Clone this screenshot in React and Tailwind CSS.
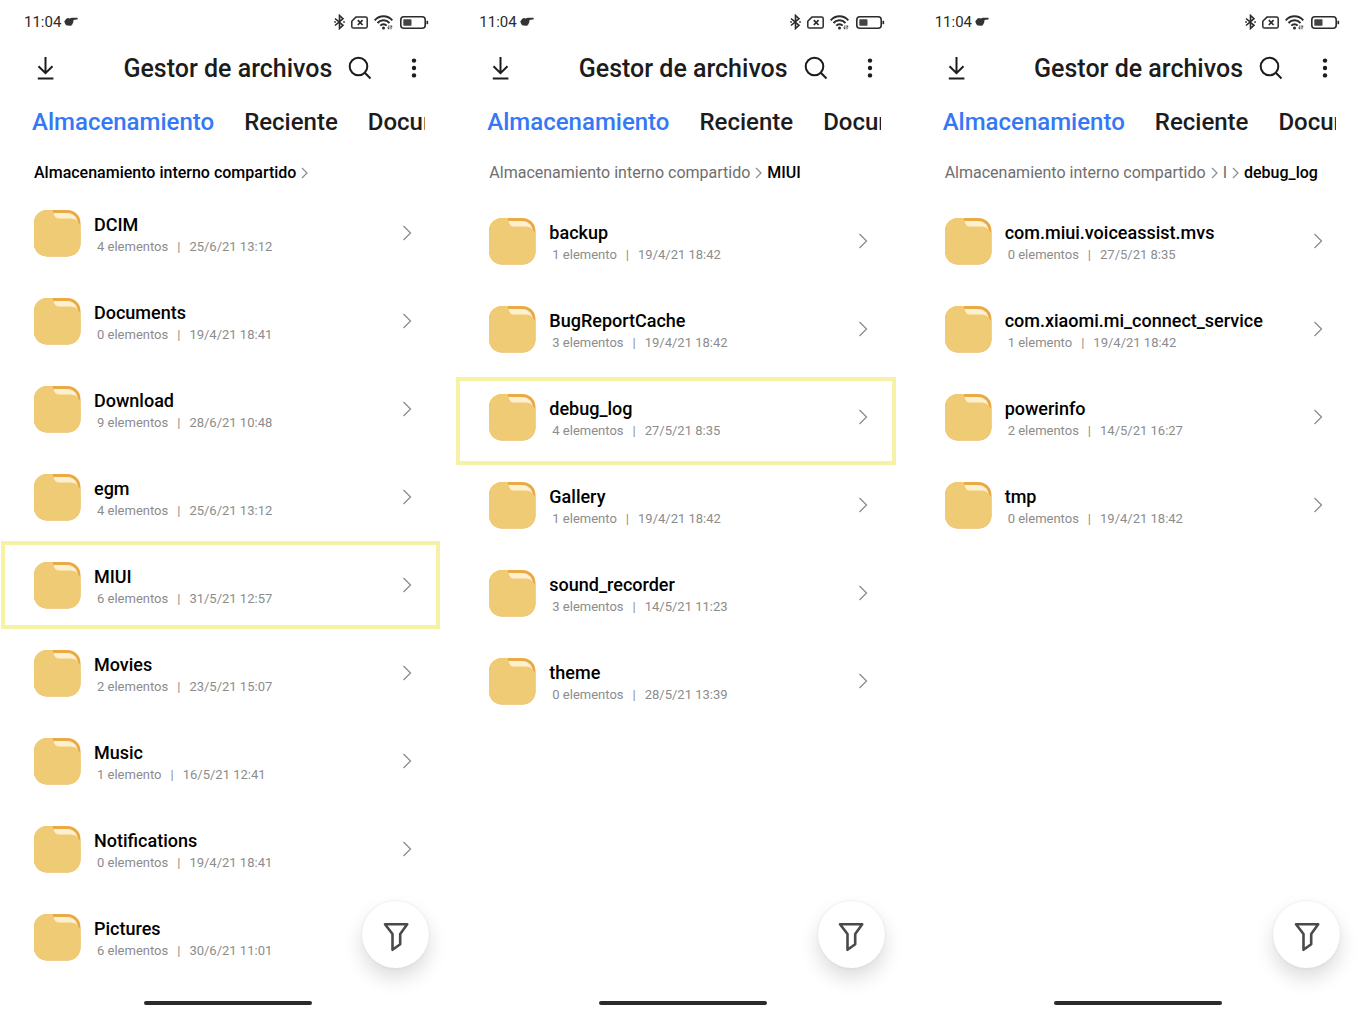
import React from "react";

const screens = [
  {
    id: "root",
    trail: ["Almacenamiento interno compartido"],
    trailingChevron: true,
    items: [
      { name: "DCIM", count: "4 elementos", date: "25/6/21 13:12" },
      { name: "Documents", count: "0 elementos", date: "19/4/21 18:41" },
      { name: "Download", count: "9 elementos", date: "28/6/21 10:48" },
      { name: "egm", count: "4 elementos", date: "25/6/21 13:12" },
      { name: "MIUI", count: "6 elementos", date: "31/5/21 12:57", mark: "top-0" },
      { name: "Movies", count: "2 elementos", date: "23/5/21 15:07" },
      { name: "Music", count: "1 elemento", date: "16/5/21 12:41" },
      { name: "Notifications", count: "0 elementos", date: "19/4/21 18:41" },
      { name: "Pictures", count: "6 elementos", date: "30/6/21 11:01" },
    ],
  },
  {
    id: "miui",
    trail: ["Almacenamiento interno compartido", "MIUI"],
    items: [
      { name: "backup", count: "1 elemento", date: "19/4/21 18:42" },
      { name: "BugReportCache", count: "3 elementos", date: "19/4/21 18:42" },
      { name: "debug_log", count: "4 elementos", date: "27/5/21 8:35", mark: "top-1" },
      { name: "Gallery", count: "1 elemento", date: "19/4/21 18:42" },
      { name: "sound_recorder", count: "3 elementos", date: "14/5/21 11:23" },
      { name: "theme", count: "0 elementos", date: "28/5/21 13:39" },
    ],
  },
  {
    id: "debug",
    trail: ["Almacenamiento interno compartido", "I", "debug_log"],
    items: [
      { name: "com.miui.voiceassist.mvs", count: "0 elementos", date: "27/5/21 8:35" },
      { name: "com.xiaomi.mi_connect_service", count: "1 elemento", date: "19/4/21 18:42" },
      { name: "powerinfo", count: "2 elementos", date: "14/5/21 16:27" },
      { name: "tmp", count: "0 elementos", date: "19/4/21 18:42" },
    ],
  },
];

function StatusBar() {
  return (
    <div className="mt-1 flex h-9 items-center justify-between pr-[26px] pl-6 text-[#2b2b2b]">
      <div className="flex items-center gap-[3px]">
        <span className="text-[15px] leading-5">11:04</span>
        <svg width="14" height="10" viewBox="0 0 14 10" fill="#333" aria-hidden="true">
          <path d="M.3 4.2 2.6 1.6C3.400.8 4.500.7 5.500 1.500L8 .8h5c1 0 1 1.700 0 1.800L9.300 2.900c.5.600.4 1.200-.1 1.700.3.700 0 1.300-.5 1.600.1.700-.3 1.200-.8 1.400-.2 1-1 1.400-1.900 1.200L3.200 8.600C1.800 8.200.8 7 .3 4.200z" />
        </svg>
      </div>
      <div className="flex items-center gap-[6px]">
        <svg width="11" height="16" viewBox="0 0 11 16" fill="none" stroke="currentColor" strokeWidth="1.600" aria-hidden="true">
          <path d="M1 4.500 9 11.300 5.500 14.500V1.500L9 4.700 1 11.500" />
          <path d="M.2 8h1.700M9.200 8h1.700" />
        </svg>
        <svg width="17" height="13" viewBox="0 0 17 13" fill="none" stroke="currentColor" aria-hidden="true">
          <path d="M5.200.9h9.300a1.700 1.700 0 0 1 1.700 1.700v7.800a1.700 1.700 0 0 1-1.700 1.700H2.500A1.700 1.700 0 0 1 .8 10.400V5.300z" strokeWidth="1.500" strokeLinejoin="round" />
          <path d="m6.800 4.200 4.800 4.800M11.600 4.200 6.800 9" strokeWidth="1.700" />
        </svg>
        <svg width="20" height="15" viewBox="0 0 20 15" fill="none" stroke="currentColor" strokeWidth="1.900" aria-hidden="true">
          <path d="M.7 5.300C5.500-.1 13.500-.1 18.300 5.300M3.500 8c3.300-3.600 8.700-3.600 12 0M6.300 10.600c1.800-1.900 4.600-1.900 6.400 0" />
          <circle cx="9.500" cy="12.900" r="1.500" fill="currentColor" stroke="none" />
          <path d="M14.800 10.500v3.700M17 10.500v3.700M13.500 12.600l1.300 1.500M17 10.600l1.300 1.500" strokeWidth=".9" />
        </svg>
        <svg width="29" height="13" viewBox="0 0 29 13" fill="none" aria-hidden="true">
          <rect x=".8" y=".8" width="24.400" height="11.400" rx="3" stroke="currentColor" strokeWidth="1.600" />
          <rect x="3.300" y="3.300" width="8.200" height="6.400" rx=".6" fill="#444" />
          <path d="M27.300 4.800v3.400" stroke="currentColor" strokeWidth="1.700" />
        </svg>
      </div>
    </div>
  );
}

function TitleBar() {
  return (
    <header className="flex h-14 items-center pr-[31px] pl-8 text-[#1c1c1c]">
      <button type="button" aria-label="Descargas" className="flex size-7 items-center justify-center">
        <svg width="18" height="24" viewBox="0 0 18 24" fill="none" stroke="currentColor" strokeWidth="2" aria-hidden="true">
          <path d="M8.500 1v16M1.500 10.200l7 7 7-7M.8 22.500h15.600" />
        </svg>
      </button>
      <h1 className="flex-1 pt-0.5 text-right text-[25px] leading-8 font-medium whitespace-nowrap">Gestor de archivos</h1>
      <button type="button" aria-label="Buscar" className="ml-4 flex size-6 items-center justify-center">
        <svg width="24" height="24" viewBox="0 0 24 24" fill="none" stroke="currentColor" strokeWidth="2" aria-hidden="true">
          <circle cx="10.500" cy="10.500" r="8.800" />
          <path d="m16.800 16.800 5.700 5.700" />
        </svg>
      </button>
      <button type="button" aria-label="Más opciones" className="ml-8 flex size-5 items-center justify-center">
        <svg width="6" height="20" viewBox="0 0 6 20" fill="currentColor" aria-hidden="true">
          <circle cx="3" cy="2.600" r="2.200" />
          <circle cx="3" cy="10" r="2.200" />
          <circle cx="3" cy="17.400" r="2.200" />
        </svg>
      </button>
    </header>
  );
}

function Tabs() {
  return (
    <nav className="mr-[30px] flex h-13 items-center gap-[30px] overflow-hidden pl-8 text-[24px] leading-8 font-medium whitespace-nowrap text-[#1c1c1c]">
      <a href="#almacenamiento" aria-current="page" className="text-[#3478f6]">Almacenamiento</a>
      <a href="#reciente">Reciente</a>
      <a href="#documentos">Docum</a>
    </nav>
  );
}

function Separator() {
  return (
    <svg width="7" height="12" viewBox="0 0 7 12" fill="none" stroke="#8c8c8c" strokeWidth="1.200" aria-hidden="true">
      <path d="m1 1 5 5-5 5" />
    </svg>
  );
}

function Breadcrumb({ trail, trailingChevron }) {
  return (
    <nav aria-label="Ruta" className="flex h-[41px] items-center gap-[5px] pt-2 pl-[34px] text-[16px] leading-6 whitespace-nowrap">
      {trail.map((part, i) => {
        const last = i === trail.length - 1;
        return (
          <React.Fragment key={part}>
            <a href={"#" + part} className={last ? "font-medium text-black" : "text-[#6e6e6e]"}>{part}</a>
            {(!last || trailingChevron) && <Separator />}
          </React.Fragment>
        );
      })}
    </nav>
  );
}

function FolderIcon() {
  return (
    <svg width="47" height="47" viewBox="0 0 47 47" className="shrink-0" aria-hidden="true">
      <rect width="46.500" height="46.500" rx="13" fill="#e9aa45" />
      <path d="M18 3h15c5.500 0 9 3 10.500 8L42 20 22 9z" fill="#fdf0cf" />
      <path d="M13 0h5.500c1.200 3 1.400 5 2.400 6.600C22 8.200 23.300 8.500 25 8.500h11c3.500 0 6 1.200 7.700 3.200 1.500 1.800 2.500 3 2.800 5.300v16.500a13 13 0 0 1-13 13H13a13 13 0 0 1-13-13V13A13 13 0 0 1 13 0z" fill="#f0cb76" />
    </svg>
  );
}

function Row({ name, count, date, mark }) {
  return (
    <li className="relative">
      {mark && (
        <span className={"pointer-events-none absolute inset-x-0 h-22 border-4 border-[#f7f1a6] " + mark} />
      )}
      <button type="button" className="flex h-22 w-full items-center pr-7 pl-[33px] text-left">
        <FolderIcon />
        <span className="ml-[13px] flex flex-1 flex-col pt-1">
          <span className="text-[18px] leading-6 font-medium text-black">{name}</span>
          <span className="flex gap-[9px] pl-[3px] text-[13px] leading-5 text-[#8c8c8c]">
            <span>{count}</span>
            <span>|</span>
            <span>{date}</span>
          </span>
        </span>
        <svg width="10" height="16" viewBox="0 0 10 16" fill="none" stroke="#8c8c8c" strokeWidth="1.300" aria-hidden="true">
          <path d="m1.500 1 7 7-7 7" />
        </svg>
      </button>
    </li>
  );
}

function Screen({ trail, trailingChevron, items }) {
  return (
    <section className="relative flex min-h-screen min-w-0 flex-col">
      <StatusBar />
      <TitleBar />
      <Tabs />
      <Breadcrumb trail={trail} trailingChevron={trailingChevron} />
      <ul className={trailingChevron ? "mr-[15px] ml-px" : "mt-2 mr-[15px] ml-px"}>
        {items.map((item) => (
          <Row key={item.name} {...item} />
        ))}
      </ul>
      <button
        type="button"
        aria-label="Filtrar"
        className="absolute right-[26px] bottom-11 flex size-[67px] items-center justify-center rounded-full bg-white shadow-[0_10px_20px_rgba(0,0,0,0.14),0_0_3px_rgba(0,0,0,0.08)]"
      >
        <svg width="26" height="30" viewBox="0 0 26 30" fill="none" stroke="#4a4a4a" strokeWidth="2.600" strokeLinejoin="round" className="mt-1" aria-hidden="true">
          <path d="M2 2.200h22.200L17.200 12v10.200l-7.700 5.600V12z" />
        </svg>
      </button>
      <div className="mx-auto mt-auto mb-[7px] h-1 w-42 rounded-full bg-[#2b2b2b]" />
    </section>
  );
}

export default function App() {
  return (
    <main className="grid min-h-screen grid-cols-3 bg-white font-[Roboto,sans-serif]">
      {screens.map((s) => (
        <Screen key={s.id} {...s} />
      ))}
    </main>
  );
}
